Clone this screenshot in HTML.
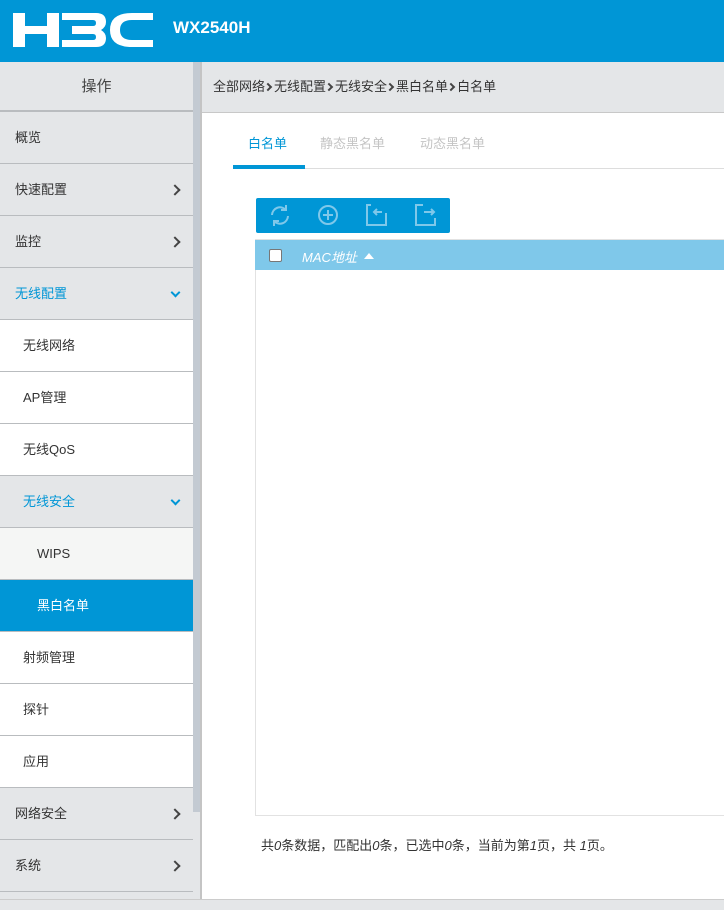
<!DOCTYPE html>
<html><head><meta charset="utf-8"><style>
*{margin:0;padding:0;box-sizing:border-box}
body{width:724px;height:910px;overflow:hidden;background:#fff;font-family:"Liberation Sans","Noto Sans CJK SC",sans-serif;font-size:13px;color:#333;position:relative}
.a{position:absolute}
.hdr{left:0;top:0;width:724px;height:62px;background:#0096d6}
.mi{position:absolute;left:0;width:193px;height:52px;line-height:51px;border-bottom:1px solid #b9bcbf;background:#e4e6e8;padding-left:15px;color:#333}
.mi.w{background:#fff;padding-left:23px}
.mi.s{background:#f5f6f5;padding-left:37px}
.mi.b{background:#0096d6;color:#fff;padding-left:37px}
.mi.t{color:#0096d6}
.chev{position:absolute;right:14px;top:22px;width:8px;height:8px;border-right:2px solid #444;border-bottom:2px solid #444;transform:rotate(-45deg)}
.chd{position:absolute;right:14px;top:21px;width:7px;height:7px;border-right:2px solid #0096d6;border-bottom:2px solid #0096d6;transform:rotate(45deg)}
.bc{display:inline-block;width:6px;height:6px;border-right:2px solid #444;border-bottom:2px solid #444;transform:rotate(-45deg);margin:0 3px 1px 0}
</style></head><body>
<div class="a hdr"></div>
<svg class="a" style="left:0;top:0" width="300" height="62">
<g fill="#fff">
<rect x="13" y="13" width="12" height="34"/><rect x="47" y="13" width="12" height="34"/><rect x="13" y="26" width="46" height="8"/>
<path d="M62 13H96Q106 13 106 22Q106 27 101 30Q106 33 106 38Q106 47 96 47H62V40H93Q96 40 96 37Q96 34 93 34H72V26H93Q96 26 96 23Q96 20 93 20H62Z"/>
<path d="M153 13H132Q110 13 110 30Q110 47 132 47H153V40H132Q120 40 120 30Q120 20 132 20H153Z"/>
</g>
<text x="173" y="33" font-family="Liberation Sans" font-weight="bold" font-size="17" fill="#fff">WX2540H</text>
</svg>
<div class="a" style="left:0;top:62px;width:193px;height:50px;background:#e4e6e8;border-bottom:2px solid #b9bcbf;text-align:center;line-height:50px;font-size:15px;color:#444">操作</div>
<div class="mi" style="top:112px">概览</div>
<div class="mi" style="top:164px">快速配置<span class="chev"></span></div>
<div class="mi" style="top:216px">监控<span class="chev"></span></div>
<div class="mi t" style="top:268px">无线配置<span class="chd"></span></div>
<div class="mi w" style="top:320px">无线网络</div>
<div class="mi w" style="top:372px">AP管理</div>
<div class="mi w" style="top:424px">无线QoS</div>
<div class="mi t" style="top:476px;padding-left:23px">无线安全<span class="chd"></span></div>
<div class="mi s" style="top:528px">WIPS</div>
<div class="mi b" style="top:580px">黑白名单</div>
<div class="mi w" style="top:632px">射频管理</div>
<div class="mi w" style="top:684px">探针</div>
<div class="mi w" style="top:736px">应用</div>
<div class="mi" style="top:788px">网络安全<span class="chev"></span></div>
<div class="mi" style="top:840px">系统<span class="chev"></span></div>
<div class="a" style="left:0;top:892px;width:193px;height:8px;background:#e4e6e8"></div>
<div class="a" style="left:193px;top:62px;width:8px;height:838px;background:#e4e6e8"></div>
<div class="a" style="left:193px;top:62px;width:7px;height:750px;background:#c3cad2"></div>
<div class="a" style="left:200px;top:62px;width:2px;height:838px;background:#c4c4c4"></div>
<div class="a" style="left:202px;top:62px;width:522px;height:51px;background:#e4e6e8;border-bottom:1px solid #c8c8c8;line-height:50px;padding-left:11px;color:#333">全部网络<span class="bc"></span>无线配置<span class="bc"></span>无线安全<span class="bc"></span>黑白名单<span class="bc"></span>白名单</div>
<div class="a" style="left:248px;top:133px;color:#0096d6">白名单</div>
<div class="a" style="left:320px;top:133px;color:#c4c4c4">静态黑名单</div>
<div class="a" style="left:420px;top:133px;color:#c4c4c4">动态黑名单</div>
<div class="a" style="left:233px;top:168px;width:491px;height:1px;background:#ddd"></div>
<div class="a" style="left:233px;top:165px;width:72px;height:4px;background:#0096d6"></div>
<div class="a" style="left:256px;top:198px;width:194px;height:35px;background:#0096d6;border-radius:2px"></div>
<svg class="a" style="left:256px;top:198px" width="194" height="35" fill="none" stroke="#7fc8ea" stroke-width="2">
<path d="M16 17a8 8 0 0 1 14-5M32 18a8 8 0 0 1-14 5"/><path d="M30 7v5h-5M18 28v-5h5"/>
<circle cx="72" cy="17" r="9"/><path d="M72 12v10M67 17h10"/>
<path d="M115 7h-4v20h19v-12M126 14h-8M121 11l-3 3 3 3M118 14v0"/>
<path d="M167 7h-7v20h19v-7M168 14h10M175 11l3 3-3 3"/>
</svg>
<div class="a" style="left:255px;top:239px;width:469px;height:577px;border:1px solid #e2e2e2;border-right:none"></div>
<div class="a" style="left:255px;top:240px;width:469px;height:30px;background:#7fc8ea"></div>
<div class="a" style="left:269px;top:249px;width:13px;height:13px;background:#fff;border:1px solid #777;border-radius:2px"></div>
<div class="a" style="left:302px;top:247px;color:#fff;font-style:italic">MAC地址</div>
<div class="a" style="left:364px;top:253px;width:0;height:0;border-left:5px solid transparent;border-right:5px solid transparent;border-bottom:6px solid #fff"></div>
<div class="a" style="left:261px;top:835px;color:#333">共<i>0</i>条数据，匹配出<i>0</i>条，已选中<i>0</i>条，当前为第<i>1</i>页，共 <i>1</i>页。</div>
<div class="a" style="left:0;top:899px;width:724px;height:11px;background:#e4e6e8;border-top:1px solid #ccc"></div>
</body></html>
